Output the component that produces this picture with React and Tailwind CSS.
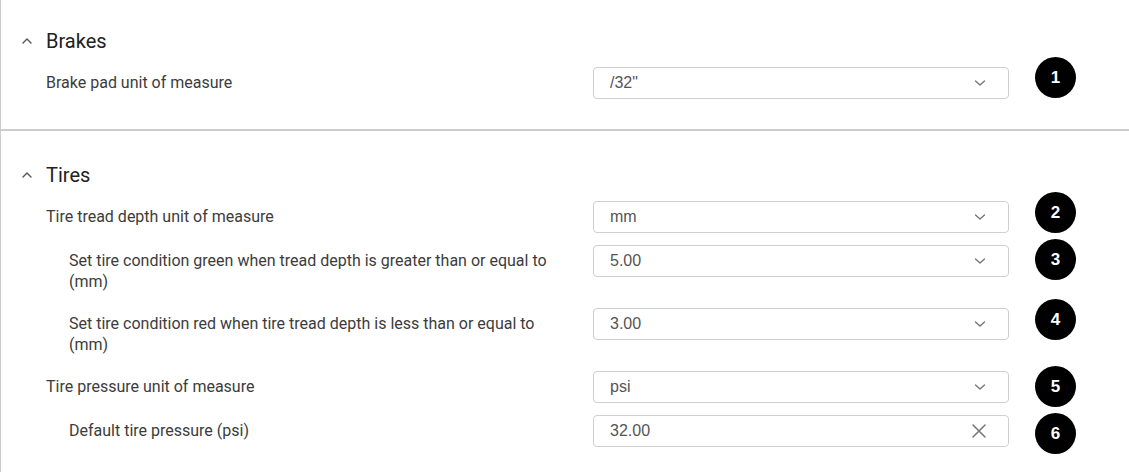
import React from "react";

const ChevronDown = () => (
  <svg width="12" height="12" viewBox="0 0 12 12" fill="none">
    <path d="M1.5 4 L6 8 L10.5 4" stroke="#757575" strokeWidth="1.4" strokeLinecap="round" strokeLinejoin="round" />
  </svg>
);

const ChevronUp = () => (
  <svg width="12" height="12" viewBox="0 0 12 12" fill="none">
    <path d="M2 8 L6 4 L10 8" stroke="#555" strokeWidth="1.4" strokeLinecap="round" strokeLinejoin="round" />
  </svg>
);

const CloseIcon = () => (
  <svg width="14" height="14" viewBox="0 0 14 14" fill="none">
    <path d="M1 1 L13 13 M13 1 L1 13" stroke="#757575" strokeWidth="1.5" strokeLinecap="round" />
  </svg>
);

function Badge({ n, top }) {
  return (
    <div
      className={`absolute left-[442px] ${top} w-[41px] h-[41px] rounded-full bg-black text-white flex items-center justify-center text-[17px] font-bold font-['Liberation_Sans',Arial,sans-serif]`}
    >
      {n}
    </div>
  );
}

function Row({ label, value, indent, badge, badgeTop, clear }) {
  return (
    <div className="flex items-start">
      <div
        className={`w-[547px] pt-[5px] pb-[4px] pr-[40px] text-[16px] leading-[21px] text-[#3c3c3c] ${indent ? "pl-[23px]" : ""}`}
      >
        {label}
      </div>
      <div className="relative">
        <div className="w-[416px] h-[32px] border border-[#cfcfcf] rounded-[4px] flex items-center justify-between pl-[16px] pr-[22px] bg-white">
          <span className="text-[16px] text-[#555] font-['Liberation_Sans',Arial,sans-serif]">{value}</span>
          {clear ? <CloseIcon /> : <ChevronDown />}
        </div>
        <Badge n={badge} top={badgeTop} />
      </div>
    </div>
  );
}

function Header({ title }) {
  return (
    <div className="flex items-center h-[28px] pl-[20px]">
      <ChevronUp />
      <span className="ml-[13px] text-[20px] text-[#212121]">{title}</span>
    </div>
  );
}

export default function App() {
  return (
    <div className="min-h-screen bg-white border-l border-[#cccccc] font-['Roboto',sans-serif]">
      {/* Brakes */}
      <div className="pt-[27px] pb-[30px] border-b-2 border-[#cccccc]">
        <Header title="Brakes" />
        <div className="mt-[12px] pl-[45px]">
          <Row label="Brake pad unit of measure" value={'/32"'} badge="1" badgeTop="-top-[10px]" />
        </div>
      </div>

      {/* Tires */}
      <div className="pt-[30px] pb-[20px]">
        <Header title="Tires" />
        <div className="mt-[12px] pl-[45px] flex flex-col gap-[12px]">
          <Row label="Tire tread depth unit of measure" value="mm" badge="2" badgeTop="-top-[9px]" />
          <Row
            indent
            label="Set tire condition green when tread depth is greater than or equal to (mm)"
            value="5.00"
            badge="3"
            badgeTop="-top-[6px]"
          />
          <Row
            indent
            label="Set tire condition red when tire tread depth is less than or equal to (mm)"
            value="3.00"
            badge="4"
            badgeTop="-top-[9px]"
          />
          <Row label="Tire pressure unit of measure" value="psi" badge="5" badgeTop="-top-[5px]" />
          <Row
            indent
            label="Default tire pressure (psi)"
            value="32.00"
            badge="6"
            badgeTop="-top-[2px]"
            clear
          />
        </div>
      </div>
    </div>
  );
}
